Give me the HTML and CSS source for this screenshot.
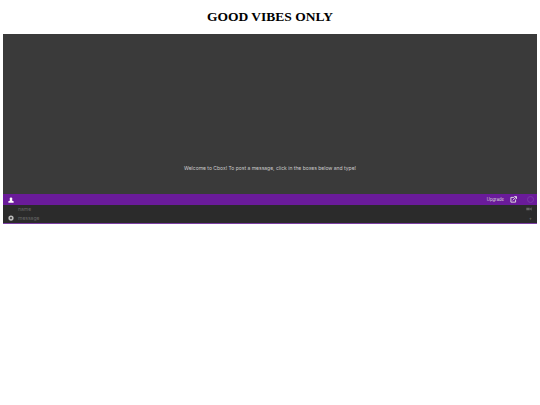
FILE: index.html
```html
<!DOCTYPE html>
<html lang="en">
<head>
  <meta charset="UTF-8" />
  <title>Good Vibes Only</title>
  <link rel="stylesheet" href="styles.css">
</head>
<body>
  <h1 class="title">GOOD VIBES ONLY</h1>

  <div class="cbox">
    <div class="messages">
      <p class="welcome">Welcome to Cbox! To post a message, click in the boxes below and type!</p>
    </div>

    <div class="toolbar">
      <svg class="user-icon" viewBox="0 0 8 8" width="6" height="6"><path d="M4 0.500a1.800 1.800 0 0 1 1.800 1.800c0 1-.5 1.600-.5 2.200l2.200 1.200v1.800H0.500V5.700l2.200-1.200c0-.6-.5-1.200-.5-2.200A1.800 1.800 0 0 1 4 0.500z" fill="#fff"/></svg>
      <span class="upgrade">Upgrade</span>
      <svg class="pop-icon" viewBox="0 0 8 8" width="7" height="7"><path d="M4.500 1.600H1v5.400h5.400V4" fill="none" stroke="#ddd" stroke-width="1.100"/><path d="M3.200 5L7 1.200M4.800 0.700h2.700V3.400" fill="none" stroke="#eee" stroke-width="1"/></svg>
      <span class="ring"></span>
    </div>

    <div class="form">
      <div class="form-row">
        <span class="form-icon"></span>
        <span class="field">name</span>
        <svg viewBox="0 0 8 6" width="6" height="4"><path d="M0 1h5v4H0zM5 3l3-2.500v5z" fill="#666"/></svg>
      </div>
      <div class="form-row">
        <span class="form-icon">
          <svg viewBox="0 0 8 8" width="6" height="6"><circle cx="4" cy="4" r="3.500" fill="#bbb"/><circle cx="4" cy="4" r="1.300" fill="#333"/></svg>
        </span>
        <span class="field">message</span>
        <span class="more">+</span>
      </div>
    </div>
  </div>
</body>
</html>
```

FILE: styles.css
```css
body {
  background-color: #fff;
  margin: 0;
  padding: 0 3px;
  font-family: "Liberation Serif", serif;
}
.title {
  margin: 0;
  padding-top: 9px;
  height: 25px;
  font-size: 13.500px;
  line-height: 16px;
  text-align: center;
  color: #000;
}
.cbox {
  font-family: Inter, "Liberation Sans", sans-serif;
  border-bottom: 1px solid #7b3fa3;
}
.messages {
  height: 160px;
  background-color: #3a3a3a;
  display: flex;
  flex-direction: column;
  justify-content: flex-end;
}
.welcome {
  margin: 0 0 22px;
  font-size: 5px;
  line-height: 7px;
  text-align: center;
  color: #ccc;
}
.toolbar {
  height: 11px;
  background-color: #6a1b9a;
  display: flex;
  align-items: center;
  padding: 0 3px 0 5px;
}
.upgrade {
  margin-left: auto;
  font-size: 4.200px;
  color: #ddd;
}
.pop-icon {
  margin-left: 6px;
}
.ring {
  width: 5px;
  height: 5px;
  margin-left: 10px;
  border: 1px solid #7a3aa6;
  border-radius: 50%;
}
.form {
  background-color: #2b2b2b;
}
.form-row {
  height: 9px;
  box-sizing: border-box;
  padding: 0 5px 1px 0;
  display: flex;
  align-items: center;
}
.form-icon {
  width: 15px;
  display: flex;
  justify-content: center;
  padding-left: 1px;
  box-sizing: border-box;
}
.field {
  flex: 1;
  font-size: 5px;
  color: #666;
}
.more {
  font-size: 5px;
  color: #777;
}
```
